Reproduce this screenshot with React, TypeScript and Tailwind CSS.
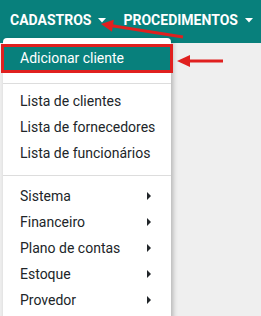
import React from "react";

const Caret = () => (
  <svg width="8" height="5" viewBox="0 0 8 5" className="ml-[7px]">
    <polygon points="0,0 8,0 4,4.5" fill="white" />
  </svg>
);

const RightCaret = () => (
  <svg width="4" height="8" viewBox="0 0 4 8">
    <polygon points="0,0 4,4 0,8" fill="#212529" />
  </svg>
);

const Item = ({ label, sub }: { label: string; sub?: boolean }) => (
  <div className="flex h-[26px] items-center justify-between whitespace-nowrap pl-[17px] pr-[20px] text-[14px] text-[#212529]">
    <span>{label}</span>
    {sub && <RightCaret />}
  </div>
);

export default function App() {
  return (
    <div
      className="relative h-[316px] w-[261px] overflow-hidden bg-[#efefef]"
      style={{ fontFamily: "Roboto, 'Liberation Sans', sans-serif" }}
    >
      <div className="flex h-[43px] items-start whitespace-nowrap bg-[#08807c] pl-[10px] pt-[10px] text-[14px] font-bold text-white">
        <div className="flex items-center">
          <span>CADASTROS</span>
          <Caret />
        </div>
        <div className="ml-[17px] flex items-center">
          <span>PROCEDIMENTOS</span>
          <Caret />
        </div>
      </div>

      <div className="absolute left-[3px] top-[38px] h-[290px] w-[168px] rounded-[4px] bg-white pt-[7px] shadow-[2px_2px_5px_rgba(0,0,0,0.25)]">
        <div className="flex h-[27px] items-center whitespace-nowrap bg-[#08807c] pl-[17px] text-[14px] text-white">
          Adicionar cliente
        </div>
        <div className="mt-[11px] h-px bg-[#dddddd]" />
        <div className="mt-[4px]">
          <Item label="Lista de clientes" />
          <Item label="Lista de fornecedores" />
          <Item label="Lista de funcionários" />
        </div>
        <div className="mt-[9px] h-px bg-[#dddddd]" />
        <div className="mt-[7px]">
          <Item label="Sistema" sub />
          <Item label="Financeiro" sub />
          <Item label="Plano de contas" sub />
          <Item label="Estoque" sub />
          <Item label="Provedor" sub />
        </div>
      </div>

      <div className="pointer-events-none absolute left-[1px] top-[44px] h-[29px] w-[172px] border-[3px] border-[#e0201f]" />

      <svg className="pointer-events-none absolute left-0 top-0" width="261" height="316">
        <line x1="183" y1="37" x2="112" y2="25.8" stroke="#e0201f" strokeWidth="3" />
        <polygon points="101,24 113.8,19.8 112,31.7" fill="#e0201f" />
        <line x1="223" y1="61" x2="189" y2="61" stroke="#e0201f" strokeWidth="3" />
        <polygon points="177,61 190,55 190,67" fill="#e0201f" />
      </svg>
    </div>
  );
}
